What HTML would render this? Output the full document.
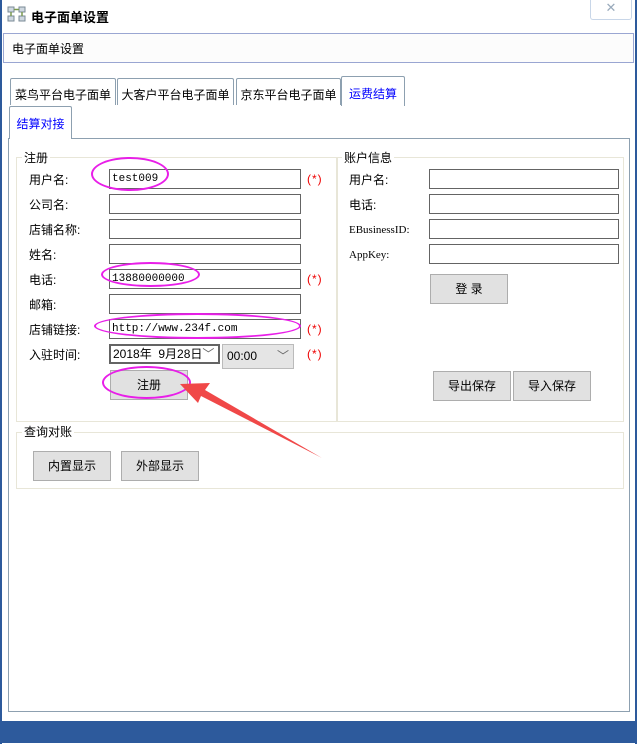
<!DOCTYPE html>
<html><head><meta charset="utf-8"><style>
*{margin:0;padding:0;box-sizing:border-box}
body{width:637px;height:744px;position:relative;background:#fff;font-family:"Liberation Sans","Noto Sans CJK SC","WenQuanYi Zen Hei",sans-serif;font-size:12px;color:#000;overflow:hidden}
.a{position:absolute}
.inp{position:absolute;border:1px solid #646464;background:#fff;height:20px;font-family:"Liberation Mono","Noto Sans CJK SC",monospace;font-size:11px;line-height:18px;padding-left:2px}
.lbl{position:absolute;font-size:12px;line-height:14px}
.btn{position:absolute;background:#e1e1e1;border:1px solid #adadad;text-align:center;font-size:12px}
.star{position:absolute;color:#e00;font-size:12px;font-family:"Liberation Sans",sans-serif;letter-spacing:1px}
.tab{position:absolute;border:1px solid #8da0b0;border-bottom:none;background:#fff;font-size:12px;text-align:center;line-height:32px;border-radius:2px 2px 0 0}
.grp{position:absolute;border:1px solid #e8e6d8}
.leg{position:absolute;background:#fff;padding:0 2px;font-size:12px;line-height:14px}
.ell{position:absolute;border:2px solid #e81ee8;border-radius:50%}
</style></head><body>
<div class="a" style="left:0;top:0;width:2px;height:744px;background:#2d5a9c"></div>
<div class="a" style="right:0;top:0;width:2px;height:744px;background:#2d5a9c"></div>
<div class="a" style="left:0;top:721px;width:637px;height:22px;background:#2d5a9c"></div>
<svg class="a" style="left:7px;top:5px" width="20" height="18" viewBox="0 0 20 18"><rect x="1" y="2" width="6" height="5" fill="#cfd8e0" stroke="#7a8a96"/><rect x="12" y="2" width="6" height="5" fill="#cfd8e0" stroke="#7a8a96"/><rect x="1" y="11" width="6" height="5" fill="#cfd8e0" stroke="#7a8a96"/><rect x="12" y="11" width="6" height="5" fill="#cfd8e0" stroke="#7a8a96"/><path d="M7 4.5H12M4 7V11M15 7V11" stroke="#7a9a50" stroke-width="1.5"/></svg>
<div class="a" style="left:31px;top:7px;font-size:13px;font-weight:bold">电子面单设置</div>
<div class="a" style="left:590px;top:0;width:42px;height:20px;border:1px solid #c8d6e8;border-top:none;border-radius:0 0 3px 3px;color:#9ab;text-align:center;font-size:13px;line-height:16px">✕</div>
<div class="a" style="left:3px;top:33px;width:631px;height:30px;border:1px solid #9aa6d2;background:#fcfcfc;padding:6px 0 0 8px;font-size:12px">电子面单设置</div>
<div class="tab" style="left:10px;top:78px;width:106px;height:27px">菜鸟平台电子面单</div>
<div class="tab" style="left:117px;top:78px;width:117px;height:27px">大客户平台电子面单</div>
<div class="tab" style="left:236px;top:78px;width:105px;height:27px">京东平台电子面单</div>
<div class="tab" style="left:341px;top:76px;width:64px;height:30px;color:#00f;line-height:34px">运费结算</div>
<div class="tab" style="left:9px;top:106px;width:63px;height:33px;color:#00f;line-height:34px;z-index:2">结算对接</div>
<div class="a" style="left:8px;top:138px;width:622px;height:574px;border:1px solid #8da0b0"></div>
<div class="grp" style="left:16px;top:157px;width:321px;height:265px"></div>
<div class="leg" style="left:22px;top:151px">注册</div>
<div class="grp" style="left:337px;top:157px;width:287px;height:265px"></div>
<div class="leg" style="left:342px;top:151px">账户信息</div>
<div class="grp" style="left:16px;top:432px;width:608px;height:57px"></div>
<div class="leg" style="left:22px;top:425px">查询对账</div>

<div class="lbl" style="left:29px;top:173px">用户名:</div><div class="inp" style="left:109px;top:169px;width:192px">test009</div><div class="star" style="left:307px;top:172px">(*)</div>
<div class="lbl" style="left:29px;top:198px">公司名:</div><div class="inp" style="left:109px;top:194px;width:192px"></div>
<div class="lbl" style="left:29px;top:223px">店铺名称:</div><div class="inp" style="left:109px;top:219px;width:192px"></div>
<div class="lbl" style="left:29px;top:248px">姓名:</div><div class="inp" style="left:109px;top:244px;width:192px"></div>
<div class="lbl" style="left:29px;top:273px">电话:</div><div class="inp" style="left:109px;top:269px;width:192px">13880000000</div><div class="star" style="left:307px;top:272px">(*)</div>
<div class="lbl" style="left:29px;top:298px">邮箱:</div><div class="inp" style="left:109px;top:294px;width:192px"></div>
<div class="lbl" style="left:29px;top:323px">店铺链接:</div><div class="inp" style="left:109px;top:319px;width:192px">http://www.234f.com</div><div class="star" style="left:307px;top:322px">(*)</div>
<div class="lbl" style="left:29px;top:348px">入驻时间:</div>
<div class="a" style="left:109px;top:344px;width:111px;height:20px;border:2px solid #646464;font-size:12px;line-height:16px;padding-left:2px">2018年&nbsp; 9月28日<span style="color:#666">﹀</span></div>
<div class="a" style="left:222px;top:344px;width:72px;height:25px;border:1px solid #bbb;background:#e5e5e5;font-size:12px;line-height:22px;padding-left:4px">00:00<span style="position:absolute;right:4px;color:#666">﹀</span></div>
<div class="star" style="left:307px;top:347px">(*)</div>
<div class="btn" style="left:110px;top:370px;width:78px;height:30px;line-height:28px">注册</div>

<div class="lbl" style="left:349px;top:173px">用户名:</div><div class="inp" style="left:429px;top:169px;width:190px"></div>
<div class="lbl" style="left:349px;top:198px">电话:</div><div class="inp" style="left:429px;top:194px;width:190px"></div>
<div class="lbl" style="left:349px;top:223px;font-family:'Liberation Serif',serif;font-size:11px">EBusinessID:</div><div class="inp" style="left:429px;top:219px;width:190px"></div>
<div class="lbl" style="left:349px;top:248px;font-family:'Liberation Serif',serif;font-size:11px">AppKey:</div><div class="inp" style="left:429px;top:244px;width:190px"></div>
<div class="btn" style="left:430px;top:274px;width:78px;height:30px;line-height:28px">登 录</div>
<div class="btn" style="left:433px;top:371px;width:78px;height:30px;line-height:28px">导出保存</div>
<div class="btn" style="left:513px;top:371px;width:78px;height:30px;line-height:28px">导入保存</div>
<div class="btn" style="left:33px;top:451px;width:78px;height:30px;line-height:28px">内置显示</div>
<div class="btn" style="left:121px;top:451px;width:78px;height:30px;line-height:28px">外部显示</div>

<div class="ell" style="left:91px;top:157px;width:78px;height:34px"></div>
<div class="ell" style="left:101px;top:262px;width:99px;height:25px"></div>
<div class="ell" style="left:94px;top:313px;width:207px;height:26px"></div>
<div class="ell" style="left:102px;top:366px;width:89px;height:33px"></div>
<svg class="a" style="left:0;top:0" width="637" height="744"><path d="M322 458 L205 390 L210 383 L180 384 L198 403 L201 396 Z" fill="#f04848"/></svg>
</body></html>
